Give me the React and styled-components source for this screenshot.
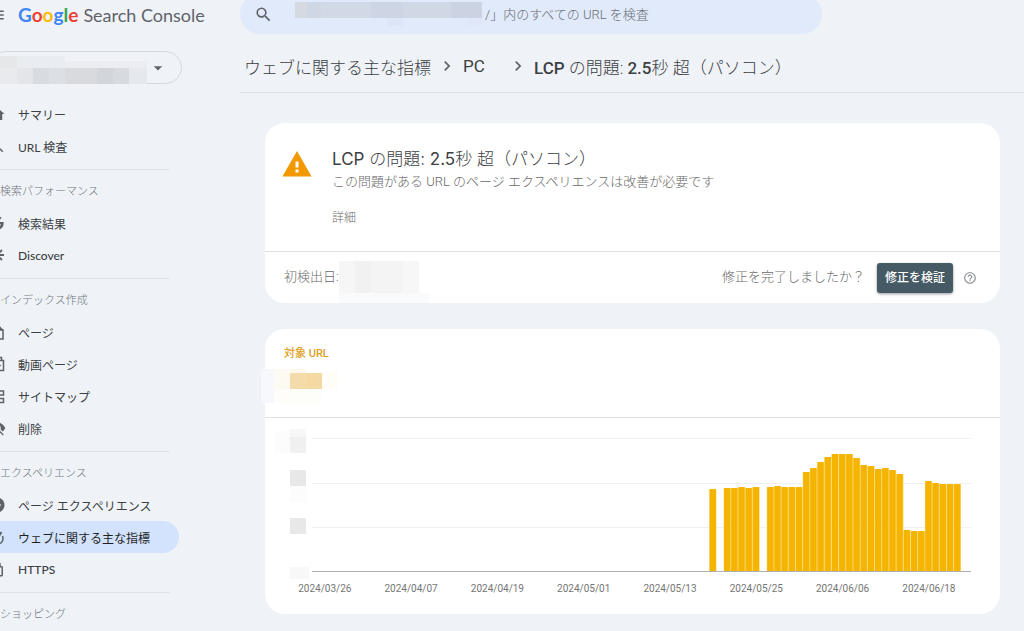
import React from 'react'
import styled, { createGlobalStyle, css } from 'styled-components'
import {
  MdMenu,
  MdSearch,
  MdHome,
  MdArrowDropDown,
  MdChevronRight,
  MdHelpOutline,
  MdAddCircle,
  MdLockOutline,
  MdVisibilityOff
} from 'react-icons/md'
import { FaGoogle } from 'react-icons/fa'

const GlobalStyle = createGlobalStyle`
  * {
    box-sizing: border-box;
  }
  body {
    margin: 0;
    background: #eff3f8;
    color: #3c4043;
    font-family: Roboto, "Noto Sans CJK JP", sans-serif;
    font-weight: 300;
    overflow: hidden;
  }
  button, input {
    font: inherit;
  }
`

const Page = styled.div`
  display: grid;
  grid-template-columns: 240px 1fr;
  height: 100vh;
  overflow: hidden;
`

/* the drawer is partly slid out to the left */
const Sidebar = styled.aside`
  margin-left: -12px;
  overflow: hidden;
`

const Brand = styled.div`
  display: flex;
  align-items: center;
  gap: 12px;
  height: 29px;
`

const IconButton = styled.button`
  display: flex;
  padding: 0;
  border: 0;
  background: none;
  color: #5f6368;
`

const HelpButton = styled(IconButton)`
  color: #8a8f94;
`

const Logo = styled.a`
  display: flex;
  align-items: baseline;
  gap: 5px;
  color: #5f6368;
  font-family: Lato, sans-serif;
  font-size: 18px;
  font-weight: 400;
  line-height: 29px;
  text-decoration: none;
  white-space: nowrap;
`

const Google = styled.span`
  font-size: 19px;
  font-weight: 700;
`

const Letter = styled.span`
  color: ${props => props.$color};
`

const PropertyPicker = styled.button`
  display: flex;
  align-items: center;
  justify-content: space-between;
  width: 194px;
  height: 33px;
  margin: 22px 0 14px;
  padding: 0 13px 0 0;
  border: 1px solid #d5d8dc;
  border-radius: 17px;
  background: none;
  color: #5f6368;
`

const Section = styled.section`
  width: 182px;
  padding: 0 0 7px;
  border-bottom: 1px solid #dfe2e6;
  & + & {
    padding-top: 5px;
  }
`

const SectionTitle = styled.h2`
  margin: 0;
  padding: 1px 0 0 12px;
  color: #6f757a;
  font-size: 11px;
  font-weight: 300;
  line-height: 31px;
`

const NavLink = styled.a`
  display: flex;
  align-items: center;
  gap: 12px;
  width: 191px;
  height: 32px;
  border-radius: 0 16px 16px 0;
  color: #3c4043;
  font-family: Lato, "Noto Sans CJK JP", sans-serif;
  font-size: 12px;
  font-weight: 400;
  text-decoration: none;
  white-space: nowrap;
  svg {
    width: 18px;
    height: 18px;
    color: #5f6368;
  }
  ${props => props.$active && css`
    background: #d3e3fd;
    color: #1f1f1f;
  `}
`

const Strong = styled.strong`
  font-weight: 500;
`

const Main = styled.main`
  min-width: 0;
`

const SearchBar = styled.label`
  display: flex;
  align-items: center;
  width: calc(100% - 202px);
  height: 40px;
  margin-top: -6px;
  padding-left: 14px;
  border-radius: 20px;
  background: #e1eafb;
  color: #5f6368;
`

const SearchInput = styled.input`
  flex: 1;
  min-width: 0;
  padding: 0;
  border: 0;
  outline: 0;
  background: none;
  font-size: 13px;
  &::placeholder {
    color: #666c71;
    opacity: 1;
  }
`

const Breadcrumbs = styled.nav`
  display: flex;
  align-items: center;
  gap: 6px;
  height: 59px;
  padding: 6px 0 0 4px;
  border-bottom: 1px solid #dfe3e8;
  font-size: 17px;
  white-space: nowrap;
  svg {
    width: 20px;
    height: 20px;
    color: #5f6368;
  }
`

const Crumb = styled.a`
  min-width: 39px;
  color: #3c4043;
  font-weight: ${props => props.$latin ? 400 : 300};
  text-decoration: none;
`

const Content = styled.div`
  display: flex;
  flex-direction: column;
  gap: 26px;
  padding: 30px 24px 16px 25px;
`

const Card = styled.section`
  border-radius: 20px;
  background: #fff;
`

const Issue = styled.div`
  display: flex;
  gap: 20px;
  padding: 24px 17px;
  border-bottom: 1px solid #e0e0e0;
`

const IssueText = styled.div`
  display: flex;
  flex-direction: column;
  align-items: flex-start;
`

const IssueTitle = styled.h1`
  margin: 0;
  font-family: Inter, "Noto Sans CJK JP", sans-serif;
  font-size: 17px;
  font-weight: 300;
  line-height: 24px;
  strong {
    font-weight: 400;
  }
`

const IssueNote = styled.p`
  margin: 0 0 16px;
  color: #6a6a6a;
  font-size: 13px;
  line-height: 22px;
`

const DetailLink = styled.a`
  color: #6a6a6a;
  font-size: 12px;
  line-height: 18px;
  text-decoration: none;
`

const IssueFooter = styled.div`
  display: flex;
  align-items: center;
  justify-content: space-between;
  height: 51px;
  padding: 0 23px 0 19px;
  color: #6a6a6a;
  font-size: 13px;
  line-height: 16px;
`

const FooterGroup = styled.div`
  display: flex;
  align-items: center;
`

const FooterLabel = styled.span`
  padding-bottom: 2px;
`

const ValidateButton = styled.button`
  height: 30px;
  margin: 0 10px 0 12px;
  padding: 0 8px;
  border: 0;
  border-radius: 3px;
  background: #455a64;
  box-shadow: 0 1px 3px rgba(0, 0, 0, 0.4);
  color: #fff;
  font-size: 12px;
  font-weight: 500;
`

const Metric = styled.div`
  height: 89px;
  padding: 16px 19px 0;
  border-bottom: 1px solid #e0e0e0;
  color: #e0a024;
`

const MetricLabel = styled.h2`
  margin: 0;
  font-size: 11px;
  font-weight: 500;
  line-height: 18px;
`

const Mosaic = styled.svg`
  display: block;
  flex: none;
  ${props => props.$pull && css`margin: ${props.$pull};`}
`

const ChartSvg = styled.svg`
  display: block;
  width: 100%;
  font-family: Roboto, sans-serif;
  font-size: 10px;
  font-weight: 400;
`

const GOOGLE = [
  ['G', '#4285f4'],
  ['o', '#ea4335'],
  ['o', '#fbbc04'],
  ['g', '#4285f4'],
  ['l', '#34a853'],
  ['e', '#ea4335']
]

const SearchResultIcon = styled(FaGoogle)`
  padding: 2px;
`

const Outline = ({ children }) => (
  <svg viewBox="0 0 18 18" fill="none" stroke="currentColor" strokeWidth="1.500">{children}</svg>
)

const DiscoverIcon = () => (
  <Outline>
    <path d="M9 2v14M2 9h14M4 4l10 10M14 4 4 14" strokeWidth="1.800" />
  </Outline>
)

const PagesIcon = () => (
  <Outline>
    <path d="M6 7V3.500h5.500V7H15v9H6z" />
    <path d="M11 2.500 15.500 7H11z" fill="currentColor" stroke="none" />
    <path d="M2.500 6v11h9" />
  </Outline>
)

const VideoIcon = () => (
  <Outline>
    <path d="M4 5.500h11.500v10H4zM7 5V2.500h6.500V5" />
    <path d="M9 8v5l4.500-2.500z" fill="currentColor" stroke="none" />
  </Outline>
)

const SitemapIcon = () => (
  <Outline>
    <path d="M11 4h4.500v4H11zM11 11.500h4.500v4H11zM2 7.500h4.500v4H2zM6.500 9.500h2M11 6H8.500v7.500H11" />
  </Outline>
)

const VitalsIcon = () => (
  <Outline>
    <path d="M14.500 8a6 6 0 1 1-9-2.500" />
    <path d="M9 11 13.500 4" strokeWidth="2" />
  </Outline>
)

const NAV = [
  {
    items: [
      { label: 'サマリー', icon: <MdHome /> },
      { label: 'URL 検査', icon: <MdSearch /> }
    ]
  },
  {
    title: '検索パフォーマンス',
    items: [
      { label: '検索結果', icon: <SearchResultIcon /> },
      { label: <Strong>Discover</Strong>, icon: <DiscoverIcon /> }
    ]
  },
  {
    title: 'インデックス作成',
    items: [
      { label: 'ページ', icon: <PagesIcon /> },
      { label: '動画ページ', icon: <VideoIcon /> },
      { label: 'サイトマップ', icon: <SitemapIcon /> },
      { label: '削除', icon: <MdVisibilityOff /> }
    ]
  },
  {
    title: 'エクスペリエンス',
    items: [
      { label: 'ページ エクスペリエンス', icon: <MdAddCircle /> },
      { label: 'ウェブに関する主な指標', icon: <VitalsIcon />, active: true },
      { label: <Strong>HTTPS</Strong>, icon: <MdLockOutline /> }
    ]
  },
  { title: 'ショッピング', items: [] }
]

// [x, y, width, height, colour]
const PROPERTY_BLOCKS = [
  [0, 0, 28, 12, '#e6e7e9'], [28, 0, 48, 12, '#e9ecf1'], [76, 5, 82, 7, '#ebedf2'],
  [0, 12, 28, 16, '#e9eaed'], [28, 12, 16, 16, '#e3e5e9'], [44, 12, 16, 16, '#d8dbe0'],
  [60, 12, 16, 16, '#dcdfe4'], [76, 12, 16, 16, '#d8dade'], [92, 12, 16, 16, '#d9dade'],
  [108, 12, 16, 16, '#d2d5da'], [124, 12, 16, 16, '#d7dadf'], [140, 12, 18, 16, '#e5e8ed']
]

const SEARCH_BLOCKS = [
  [0, 0, 12, 16, '#d4d9e2'], [12, 0, 14, 16, '#cfd6e4'], [26, 0, 50, 16, '#d1d8e6'],
  [76, 0, 32, 16, '#cdd5e4'], [108, 0, 48, 16, '#d0d7e5'], [156, 0, 31, 16, '#cbd3e2'],
  [92, 16, 16, 8, '#dde6f8'], [172, 16, 15, 8, '#dfe7f8']
]

const DATE_BLOCKS = [
  [0, 0, 16, 32, '#f6f6f6'], [16, 0, 16, 32, '#f1f1f1'], [32, 0, 32, 32, '#f4f4f4'],
  [64, 0, 16, 32, '#f7f7f7'], [0, 32, 90, 10, '#f9fafc']
]

const METRIC_BLOCKS = [
  [0, 0, 13, 34, '#f6f8fd'], [13, 0, 16, 20, '#fdf9f3'], [29, 0, 16, 4, '#fcf8ef'],
  [29, 4, 16, 16, '#f4dbaa'], [45, 4, 16, 16, '#f4d9a2'], [61, 2, 16, 18, '#fffdf7'],
  [13, 20, 16, 14, '#fffdfa'], [29, 20, 32, 14, '#fdfdf9']
]

const AXIS_BLOCKS = [
  [10, 13, 15, 22, '#fcfcfc'], [25, 11, 16, 8, '#f7f7f7'], [25, 19, 16, 16, '#f0f0f0'],
  [25, 52, 16, 16, '#e8e8e8'], [25, 68, 16, 16, '#fcfcfc'], [25, 100, 16, 16, '#e8e8e8'],
  [25, 149, 19, 12, '#f8f8f8']
]

const DATES = [
  '2024/03/26', '2024/04/07', '2024/04/19', '2024/05/01',
  '2024/05/13', '2024/05/25', '2024/06/06', '2024/06/18'
]

const BARS = [
  83, 0, 84, 84, 85, 84, 85, 0, 85, 86, 85, 85, 85,
  100, 104, 110, 115, 118, 118, 118, 114, 107, 106, 103, 104, 102, 98,
  42, 41, 41, 91, 89, 88, 88, 88
]

const Blocks = ({ data }) => data.map(([x, y, w, h, fill], i) => (
  <rect key={i} x={x} y={y} width={w} height={h} fill={fill} />
))

const Redacted = ({ width, height, data, pull }) => (
  <Mosaic width={width} height={height} $pull={pull} shapeRendering="crispEdges" aria-hidden="true">
    <Blocks data={data} />
  </Mosaic>
)

const WarningIcon = () => (
  <svg width="30" height="34" viewBox="0 0 30 34" aria-label="警告">
    <path d="M15 4 29.600 29.500H.4z" fill="#f29900" />
    <path d="M13.500 14.500h3v6h-3zM13.500 22.500h3v3h-3z" fill="#fff" />
  </svg>
)

const Chart = () => {
  const step = 7.19
  return (
    <ChartSvg viewBox="0 0 735 196" role="img" aria-label="対象 URL の推移">
      <Blocks data={AXIS_BLOCKS} />
      <path d="M47 20.500H706M47 65.500H706M47 109.500H706" stroke="#f0f0f0" />
      {BARS.map((h, i) => h > 0 && (
        <g key={i}>
          <rect x={444.3 + i * step} y={154 - h} width={step} height={h} fill="#fad878" />
          <rect x={444.6 + i * step} y={154 - h} width="6.300" height={h} rx="1" fill="#f5b400" />
        </g>
      ))}
      <path d="M47 153.500H706" stroke="#b0b0b0" />
      {DATES.map((date, i) => (
        <text key={date} x={59.8 + i * 86.3} y="174" textAnchor="middle" fill="#757575">{date}</text>
      ))}
    </ChartSvg>
  )
}

const App = () => (
  <>
    <GlobalStyle />
    <Page>
      <Sidebar>
        <Brand>
          <IconButton aria-label="メニュー"><MdMenu size={18} /></IconButton>
          <Logo href="#">
            <Google>
              {GOOGLE.map(([char, color], i) => <Letter key={i} $color={color}>{char}</Letter>)}
            </Google>
            Search Console
          </Logo>
        </Brand>
        <PropertyPicker aria-label="プロパティを選択">
          <Redacted width={158} height={28} data={PROPERTY_BLOCKS} pull="4px 0 0" />
          <MdArrowDropDown size={20} />
        </PropertyPicker>
        {NAV.map((section, i) => (
          <Section key={i}>
            {section.title && <SectionTitle>{section.title}</SectionTitle>}
            {section.items.map((item, j) => (
              <NavLink key={j} href="#" $active={item.active}>
                {item.icon}
                {item.label}
              </NavLink>
            ))}
          </Section>
        ))}
      </Sidebar>
      <Main>
        <SearchBar>
          <MdSearch size={19} />
          <Redacted width={187} height={24} data={SEARCH_BLOCKS} pull="0 3px 0 22px" />
          <SearchInput type="text" aria-label="URL を検査" placeholder="/」内のすべての URL を検査" />
        </SearchBar>
        <Breadcrumbs>
          <Crumb href="#">ウェブに関する主な指標</Crumb>
          <MdChevronRight />
          <Crumb href="#" $latin>PC</Crumb>
          <MdChevronRight />
          <Crumb as="span">
            <Strong>LCP</Strong> の問題: <Strong>2.5</Strong>秒 超（パソコン）
          </Crumb>
        </Breadcrumbs>
        <Content>
          <Card>
            <Issue>
              <WarningIcon />
              <IssueText>
                <IssueTitle>
                  <strong>LCP</strong> の問題: <strong>2.5</strong>秒 超（パソコン）
                </IssueTitle>
                <IssueNote>この問題がある URL のページ エクスペリエンスは改善が必要です</IssueNote>
                <DetailLink href="#">詳細</DetailLink>
              </IssueText>
            </Issue>
            <IssueFooter>
              <FooterGroup>
                <FooterLabel>初検出日:</FooterLabel>
                <Redacted width={90} height={42} data={DATE_BLOCKS} pull="9px 0 0" />
              </FooterGroup>
              <FooterGroup>
                <FooterLabel>修正を完了しましたか？</FooterLabel>
                <ValidateButton>修正を検証</ValidateButton>
                <HelpButton aria-label="ヘルプ"><MdHelpOutline size={14} /></HelpButton>
              </FooterGroup>
            </IssueFooter>
          </Card>
          <Card>
            <Metric>
              <MetricLabel>対象 URL</MetricLabel>
              <Redacted width={77} height={34} data={METRIC_BLOCKS} pull="6px 0 0 -23px" />
            </Metric>
            <Chart />
          </Card>
        </Content>
      </Main>
    </Page>
  </>
)

export default App
